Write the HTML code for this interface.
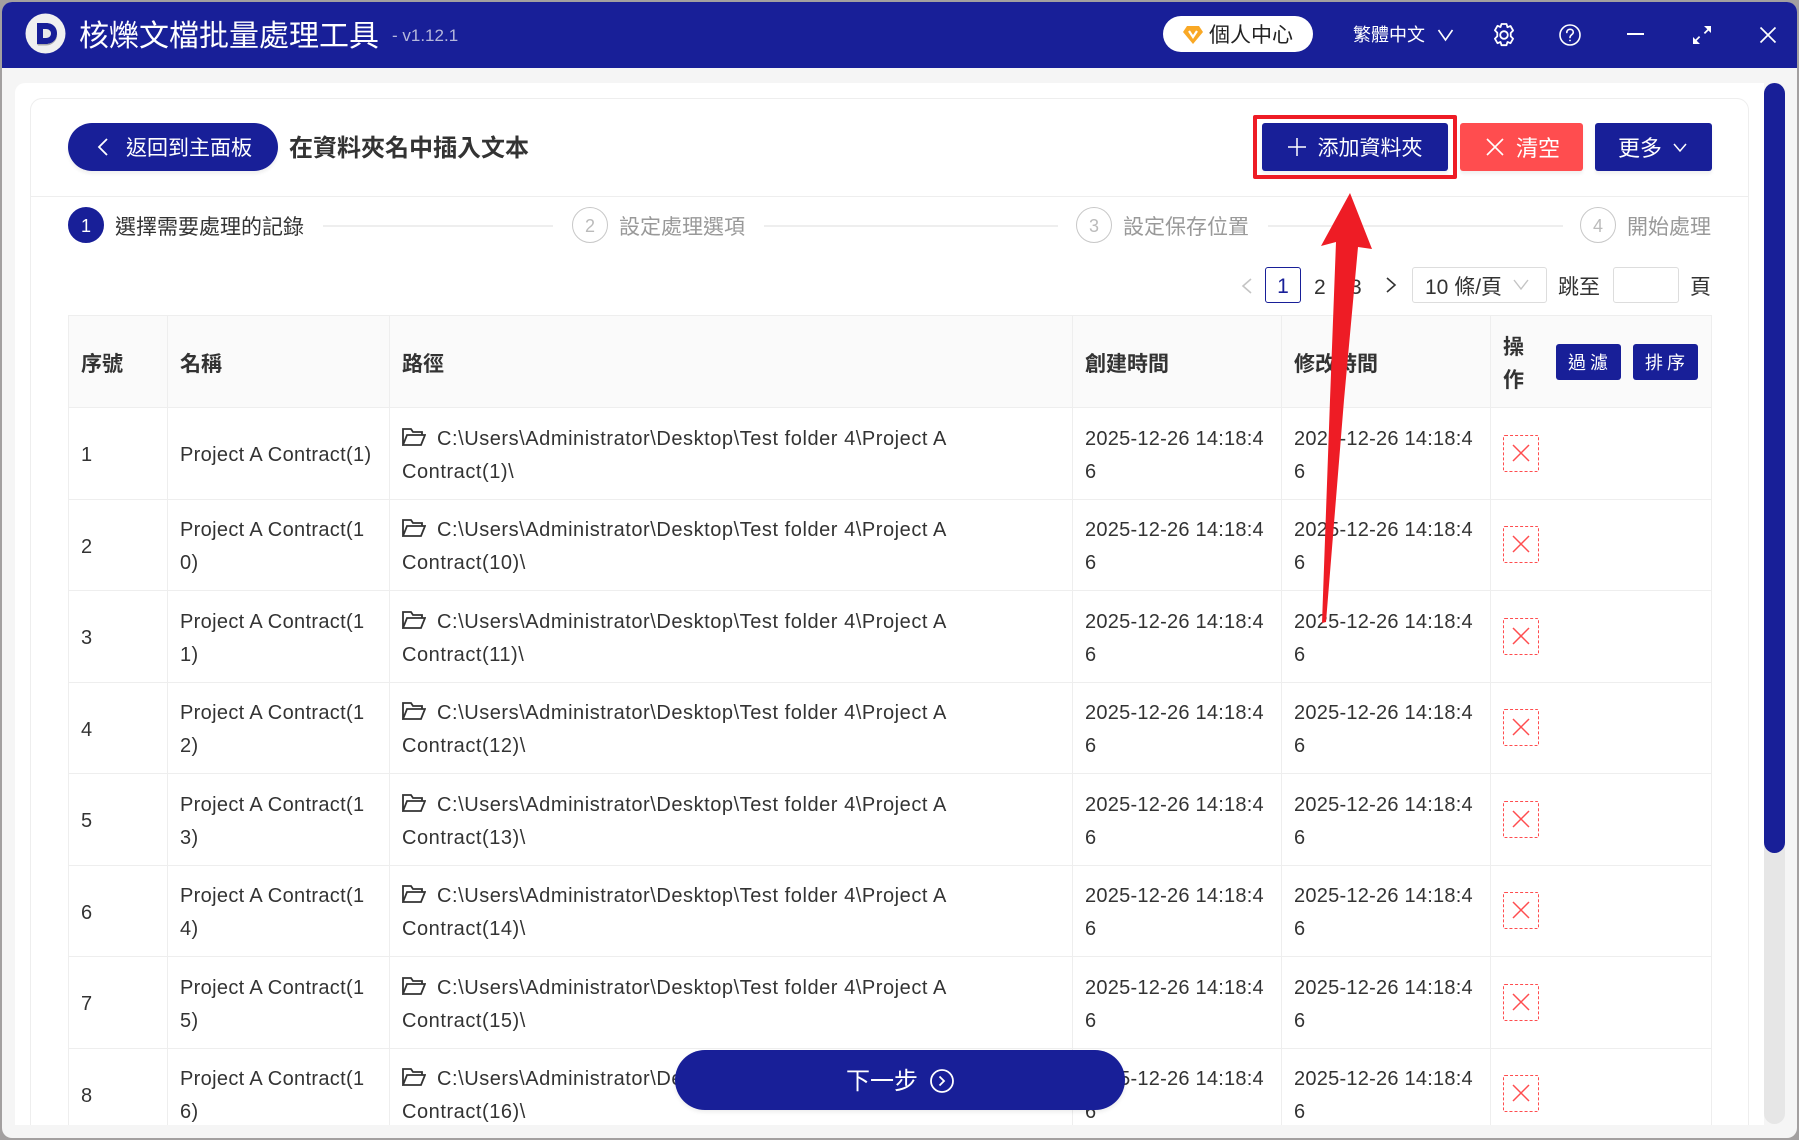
<!DOCTYPE html>
<html lang="zh-Hant">
<head>
<meta charset="utf-8">
<title>核爍文檔批量處理工具</title>
<style>
html,body{margin:0;padding:0;width:1799px;height:1140px;overflow:hidden;background:#a3a0a0;}
*{box-sizing:border-box;}
body{font-family:"Liberation Sans","Noto Sans CJK TC",sans-serif;color:#333;position:relative;}
.a{position:absolute;white-space:nowrap;}
#win{position:absolute;left:2px;top:2px;width:1795px;height:1136px;background:#f5f5f5;border-radius:10px 10px 10px 10px;overflow:hidden;}
#hdr{position:absolute;left:2px;top:2px;width:1795px;height:66px;background:#181f98;border-radius:10px 10px 0 0;}
#panel{position:absolute;left:15px;top:83px;width:1749px;height:1042px;background:#fff;border-radius:10px 0 0 0;overflow:hidden;}
#card{position:absolute;left:30px;top:98px;width:1719px;height:1027px;border:1px solid #eee;border-bottom:0;border-radius:12px 12px 0 0;}
.btn{position:absolute;background:#181f98;color:#fff;text-align:center;font-size:21px;height:48px;line-height:52px;box-shadow:0 3px 3px rgba(0,0,0,.06);white-space:nowrap;}
.num{position:absolute;top:207px;width:36px;height:36px;border:1px solid #c8c8c8;border-radius:50%;text-align:center;line-height:36px;font-size:18px;color:#bbb;background:#fff;}
.stp{position:absolute;top:212px;font-size:21px;line-height:32px;color:#999;white-space:nowrap;}
.ln{position:absolute;top:225px;height:2px;background:#eee;}
.pg{position:absolute;top:267px;height:36px;line-height:41px;font-size:21px;color:#333;white-space:nowrap;}
#tb{position:absolute;left:68px;top:315px;width:1644px;height:810px;overflow:hidden;}
table{border-collapse:collapse;table-layout:fixed;width:1643px;font-size:20px;letter-spacing:.33px;color:#333;}
td,th{border:1px solid #eee;padding:5px 12px 0;line-height:33px;text-align:left;vertical-align:middle;white-space:nowrap;overflow:hidden;}
th{background:#fafafa;height:92px;font-size:21px;letter-spacing:0;font-weight:700;}
td{height:91.5px;}
td.p{letter-spacing:.55px;}
td.d{letter-spacing:.24px;}
td.x{padding-top:0;}
.fi{display:inline-block;width:24px;height:18px;margin-right:11px;vertical-align:-1px;}
.del{display:block;width:36px;height:37px;border:1px dashed #ff4d4f;border-radius:2px;position:relative;}
.del svg{position:absolute;left:7px;top:7px;}
.tiny{position:absolute;top:344px;width:65px;height:36px;line-height:38px;padding-left:3px;background:#181f98;color:#fff;text-align:center;font-size:18px;letter-spacing:4px;border-radius:3px;}
</style>
</head>
<body>
<div id="win"></div>
<div id="hdr"></div>

<!-- logo -->
<svg class="a" style="left:25px;top:13px" width="41" height="41" viewBox="0 0 41 41">
<circle cx="20.5" cy="20.5" r="20" fill="#f0f0f0"/>
<path d="M12 10h9c7 0 11 4.500 11 10.500S28 31 21 31h-9z" fill="#181f98"/>
<path d="M18 16h3c3 0 5 2 5 4.500S24 25 21 25h-3z" fill="#e9e9e9"/>
<path d="M12 31h9c7 0 11-4.500 11-10.500 1 6-4 12-11 12h-8z" fill="#aaa"/>
</svg>
<div class="a" style="left:79px;top:16px;font-size:30px;line-height:42px;color:#fff;">核爍文檔批量處理工具</div>
<div class="a" style="left:392px;top:24px;font-size:17px;line-height:24px;color:#b6b8dc;">- v1.12.1</div>

<!-- top right -->
<div class="a" style="left:1163px;top:16px;width:150px;height:36px;background:#fff;border-radius:18px;"></div>
<svg class="a" style="left:1182px;top:25px" width="22" height="20" viewBox="0 0 22 20"><path d="M5 1h12l4 6-10 12L1 7z" fill="#f9a825"/><path d="M7 6l4 6 4-6" fill="none" stroke="#fff" stroke-width="2.200"/></svg>
<div class="a" style="left:1209px;top:21px;font-size:21px;line-height:30px;color:#222;">個人中心</div>
<div class="a" style="left:1353px;top:21px;font-size:18px;line-height:28px;color:#fff;">繁體中文</div>
<svg class="a" style="left:1437px;top:28px" width="17" height="14" viewBox="0 0 17 14"><path d="M1.500 2l7 10 7-10" fill="none" stroke="#fff" stroke-width="1.600"/></svg>
<svg class="a" style="left:1492px;top:22px" width="24" height="26" viewBox="0 0 24 26" fill="none" stroke="#fff" stroke-width="1.800"><path d="M9.500 2h5l1 3.200 3-1.200 2.600 4.500-2.400 2.500v3.200l2.400 2.500-2.600 4.500-3-1.200-1 3.200h-5l-1-3.200-3 1.200-2.600-4.500 2.400-2.500V10.800L2.900 8.300 5.500 3.800l3 1.200z" stroke-linejoin="round"/><circle cx="12" cy="13" r="3.800"/></svg>
<svg class="a" style="left:1558px;top:23px" width="24" height="24" viewBox="0 0 24 24" fill="none" stroke="#fff" stroke-width="1.600"><circle cx="12" cy="12" r="10"/><path d="M8.800 9.500c0-2 1.500-3.200 3.300-3.200s3.200 1.200 3.200 2.900c0 2.400-3.300 2.500-3.300 5.300" stroke-linecap="round"/><circle cx="12" cy="17.500" r=".9" fill="#fff" stroke="none"/></svg>
<div class="a" style="left:1627px;top:33px;width:17px;height:2px;background:#fff;"></div>
<svg class="a" style="left:1692px;top:25px" width="20" height="20" viewBox="0 0 20 20" fill="#fff"><path d="M12 1h7v7l-2.500-2.500-3.500 3.500-1.200-1.200 3.500-3.500zM8 19H1v-7l2.500 2.500L7 11l1.200 1.200-3.500 3.500z"/></svg>
<svg class="a" style="left:1759px;top:26px" width="18" height="18" viewBox="0 0 18 18"><path d="M1.500 1.500l15 15M16.500 1.500l-15 15" stroke="#fff" stroke-width="1.700" fill="none"/></svg>

<div id="panel"></div>
<div id="card"></div>
<div class="a" style="left:31px;top:196px;width:1717px;height:1px;background:#eee;"></div>

<!-- toolbar -->
<div class="btn" style="left:68px;top:123px;width:210px;border-radius:24px;text-align:left;padding-left:58px;">返回到主面板</div>
<svg class="a" style="left:96px;top:137px" width="14" height="20" viewBox="0 0 14 20"><path d="M11 2L3 10l8 8" fill="none" stroke="#fff" stroke-width="1.800"/></svg>
<div class="a" style="left:289px;top:132px;font-size:24px;line-height:34px;font-weight:700;color:#333;">在資料夾名中插入文本</div>

<div class="btn" style="left:1262px;top:123px;width:186px;border-radius:3px;padding-left:30px;">添加資料夾</div>
<svg class="a" style="left:1288px;top:138px" width="18" height="18" viewBox="0 0 18 18"><path d="M9 0v18M0 9h18" stroke="#fff" stroke-width="1.500"/></svg>
<div class="a" style="left:1253px;top:115px;width:204px;height:64px;border:4px solid #ee1c25;border-radius:2px;"></div>
<div class="btn" style="left:1460px;top:123px;width:123px;border-radius:3px;background:#ff4d4f;padding-left:33px;font-size:22px;">清空</div>
<svg class="a" style="left:1486px;top:138px" width="18" height="18" viewBox="0 0 18 18"><path d="M1 1l16 16M17 1L1 17" stroke="#fff" stroke-width="1.600"/></svg>
<div class="btn" style="left:1595px;top:123px;width:117px;border-radius:3px;padding-right:27px;font-size:22px;">更多</div>
<svg class="a" style="left:1673px;top:143px" width="14" height="10" viewBox="0 0 14 10"><path d="M1 1l6 7 6-7" fill="none" stroke="#fff" stroke-width="1.500"/></svg>

<!-- steps -->
<div class="num" style="left:68px;background:#181f98;border-color:#181f98;color:#fff;">1</div>
<div class="stp" style="left:115px;color:#333;">選擇需要處理的記錄</div>
<div class="ln" style="left:323px;width:230px;"></div>
<div class="num" style="left:572px;">2</div>
<div class="stp" style="left:619px;">設定處理選項</div>
<div class="ln" style="left:764px;width:294px;"></div>
<div class="num" style="left:1076px;">3</div>
<div class="stp" style="left:1123px;">設定保存位置</div>
<div class="ln" style="left:1268px;width:295px;"></div>
<div class="num" style="left:1580px;">4</div>
<div class="stp" style="left:1627px;">開始處理</div>

<!-- pagination -->
<svg class="a" style="left:1240px;top:277px" width="14" height="18" viewBox="0 0 14 18"><path d="M11 2L3 9l8 7" fill="none" stroke="#c4c4c4" stroke-width="1.600"/></svg>
<div class="pg" style="left:1265px;width:36px;border:1px solid #181f98;border-radius:3px;text-align:center;color:#181f98;line-height:38px;">1</div>
<div class="pg" style="left:1314px;">2</div>
<div class="pg" style="left:1350px;">3</div>
<svg class="a" style="left:1384px;top:276px" width="14" height="18" viewBox="0 0 14 18"><path d="M3 2l8 7-8 7" fill="none" stroke="#333" stroke-width="1.600"/></svg>
<div class="pg" style="left:1412px;width:135px;border:1px solid #ddd;border-radius:3px;padding-left:12px;line-height:39px;">10 條/頁</div>
<svg class="a" style="left:1513px;top:279px" width="16" height="12" viewBox="0 0 16 12"><path d="M1 1l7 9 7-9" fill="none" stroke="#c4c4c4" stroke-width="1.400"/></svg>
<div class="pg" style="left:1558px;">跳至</div>
<div class="pg" style="left:1613px;width:66px;border:1px solid #ddd;border-radius:3px;"></div>
<div class="pg" style="left:1690px;">頁</div>

<!-- table -->
<div id="tb">
<table>
<colgroup><col style="width:99px"><col style="width:222px"><col style="width:683px"><col style="width:209px"><col style="width:209px"><col style="width:221px"></colgroup>
<tr><th>序號</th><th>名稱</th><th>路徑</th><th>創建時間</th><th>修改時間</th><th>操<br>作</th></tr>
<tr><td>1</td><td>Project A Contract(1)</td><td class="p"><svg class="fi" viewBox="0 0 24 18" fill="none" stroke="#333" stroke-width="1.800"><path d="M1 17V1h8l2 3h9v3M1 17h18l4-10H5z"/></svg>C:\Users\Administrator\Desktop\Test folder 4\Project A<br>Contract(1)\</td><td class="d">2025-12-26 14:18:4<br>6</td><td class="d">2025-12-26 14:18:4<br>6</td><td class="x"><span class="del"><svg width="20" height="20" viewBox="0 0 20 20"><path d="M2 2l16 16M18 2L2 18" stroke="#ff4d4f" stroke-width="1.500"/></svg></span></td></tr>
<tr><td>2</td><td>Project A Contract(1<br>0)</td><td class="p"><svg class="fi" viewBox="0 0 24 18" fill="none" stroke="#333" stroke-width="1.800"><path d="M1 17V1h8l2 3h9v3M1 17h18l4-10H5z"/></svg>C:\Users\Administrator\Desktop\Test folder 4\Project A<br>Contract(10)\</td><td class="d">2025-12-26 14:18:4<br>6</td><td class="d">2025-12-26 14:18:4<br>6</td><td class="x"><span class="del"><svg width="20" height="20" viewBox="0 0 20 20"><path d="M2 2l16 16M18 2L2 18" stroke="#ff4d4f" stroke-width="1.500"/></svg></span></td></tr>
<tr><td>3</td><td>Project A Contract(1<br>1)</td><td class="p"><svg class="fi" viewBox="0 0 24 18" fill="none" stroke="#333" stroke-width="1.800"><path d="M1 17V1h8l2 3h9v3M1 17h18l4-10H5z"/></svg>C:\Users\Administrator\Desktop\Test folder 4\Project A<br>Contract(11)\</td><td class="d">2025-12-26 14:18:4<br>6</td><td class="d">2025-12-26 14:18:4<br>6</td><td class="x"><span class="del"><svg width="20" height="20" viewBox="0 0 20 20"><path d="M2 2l16 16M18 2L2 18" stroke="#ff4d4f" stroke-width="1.500"/></svg></span></td></tr>
<tr><td>4</td><td>Project A Contract(1<br>2)</td><td class="p"><svg class="fi" viewBox="0 0 24 18" fill="none" stroke="#333" stroke-width="1.800"><path d="M1 17V1h8l2 3h9v3M1 17h18l4-10H5z"/></svg>C:\Users\Administrator\Desktop\Test folder 4\Project A<br>Contract(12)\</td><td class="d">2025-12-26 14:18:4<br>6</td><td class="d">2025-12-26 14:18:4<br>6</td><td class="x"><span class="del"><svg width="20" height="20" viewBox="0 0 20 20"><path d="M2 2l16 16M18 2L2 18" stroke="#ff4d4f" stroke-width="1.500"/></svg></span></td></tr>
<tr><td>5</td><td>Project A Contract(1<br>3)</td><td class="p"><svg class="fi" viewBox="0 0 24 18" fill="none" stroke="#333" stroke-width="1.800"><path d="M1 17V1h8l2 3h9v3M1 17h18l4-10H5z"/></svg>C:\Users\Administrator\Desktop\Test folder 4\Project A<br>Contract(13)\</td><td class="d">2025-12-26 14:18:4<br>6</td><td class="d">2025-12-26 14:18:4<br>6</td><td class="x"><span class="del"><svg width="20" height="20" viewBox="0 0 20 20"><path d="M2 2l16 16M18 2L2 18" stroke="#ff4d4f" stroke-width="1.500"/></svg></span></td></tr>
<tr><td>6</td><td>Project A Contract(1<br>4)</td><td class="p"><svg class="fi" viewBox="0 0 24 18" fill="none" stroke="#333" stroke-width="1.800"><path d="M1 17V1h8l2 3h9v3M1 17h18l4-10H5z"/></svg>C:\Users\Administrator\Desktop\Test folder 4\Project A<br>Contract(14)\</td><td class="d">2025-12-26 14:18:4<br>6</td><td class="d">2025-12-26 14:18:4<br>6</td><td class="x"><span class="del"><svg width="20" height="20" viewBox="0 0 20 20"><path d="M2 2l16 16M18 2L2 18" stroke="#ff4d4f" stroke-width="1.500"/></svg></span></td></tr>
<tr><td>7</td><td>Project A Contract(1<br>5)</td><td class="p"><svg class="fi" viewBox="0 0 24 18" fill="none" stroke="#333" stroke-width="1.800"><path d="M1 17V1h8l2 3h9v3M1 17h18l4-10H5z"/></svg>C:\Users\Administrator\Desktop\Test folder 4\Project A<br>Contract(15)\</td><td class="d">2025-12-26 14:18:4<br>6</td><td class="d">2025-12-26 14:18:4<br>6</td><td class="x"><span class="del"><svg width="20" height="20" viewBox="0 0 20 20"><path d="M2 2l16 16M18 2L2 18" stroke="#ff4d4f" stroke-width="1.500"/></svg></span></td></tr>
<tr><td>8</td><td>Project A Contract(1<br>6)</td><td class="p"><svg class="fi" viewBox="0 0 24 18" fill="none" stroke="#333" stroke-width="1.800"><path d="M1 17V1h8l2 3h9v3M1 17h18l4-10H5z"/></svg>C:\Users\Administrator\Desktop\Test folder 4\Project A<br>Contract(16)\</td><td class="d">2025-12-26 14:18:4<br>6</td><td class="d">2025-12-26 14:18:4<br>6</td><td class="x"><span class="del"><svg width="20" height="20" viewBox="0 0 20 20"><path d="M2 2l16 16M18 2L2 18" stroke="#ff4d4f" stroke-width="1.500"/></svg></span></td></tr>
</table>
</div>
<div class="tiny" style="left:1556px;">過濾</div>
<div class="tiny" style="left:1633px;">排序</div>

<!-- scrollbar -->
<div class="a" style="left:1764px;top:83px;width:21px;height:1041px;background:#e6e6e6;border-radius:11px;"></div>
<div class="a" style="left:1764px;top:83px;width:21px;height:770px;background:#181f98;border-radius:11px;"></div>

<!-- next -->
<div class="btn" style="left:675px;top:1050px;width:450px;height:60px;line-height:64px;border-radius:30px;font-size:24px;padding-right:36px;box-shadow:0 2px 4px rgba(0,0,0,.08);">下一步</div>
<svg class="a" style="left:929px;top:1068px" width="26" height="26" viewBox="0 0 26 26" fill="none" stroke="#fff" stroke-width="1.800"><circle cx="13" cy="13" r="11"/><path d="M10.500 8.500L15 13l-4.500 4.500"/></svg>

<!-- arrow -->
<svg class="a" style="left:0;top:0;pointer-events:none" width="1799" height="1140" viewBox="0 0 1799 1140"><polygon points="1350,193 1372,249 1358,247 1344,400 1326,622 1322,623 1330,400 1336,242 1321,246" fill="#ee1c25"/></svg>
</body>
</html>
